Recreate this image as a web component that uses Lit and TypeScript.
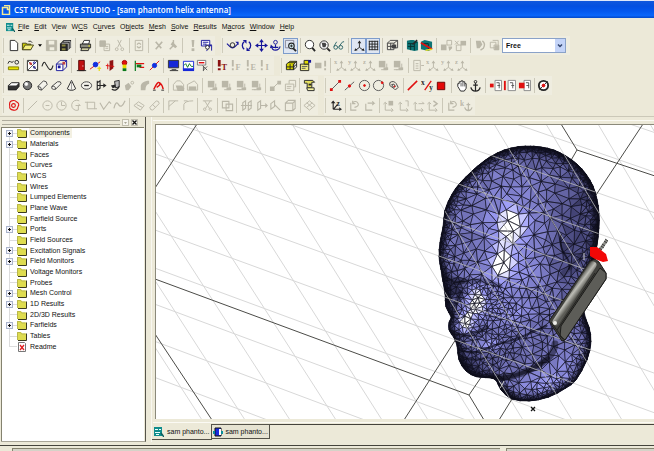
import { LitElement, html, svg, css } from "lit";
import { customElement, property, state } from "lit/decorators.js";
import { classMap } from "lit/directives/class-map.js";

/* ---------- icon drawing ---------- */
const G = "#bab7a8";
const K = "#262626";
const R = "#e01010";
const B = "#16169a";
const s = (d: string, c = K, w = 1) =>
  svg`<path d=${d} fill="none" stroke=${c} stroke-width=${w}></path>`;
const f = (d: string, c = K) => svg`<path d=${d} fill=${c}></path>`;
const fs = (d: string, c: string, k = K) =>
  svg`<path d=${d} fill=${c} stroke=${k} stroke-width="1"></path>`;
const o = (x: number, y: number, r: number, c = K, fill = "none", w = 1) =>
  svg`<circle cx=${x} cy=${y} r=${r} fill=${fill} stroke=${c} stroke-width=${w}></circle>`;
const t = (x: number, y: number, c: string, str: string, size = 7) =>
  svg`<text x=${x} y=${y} fill=${c} font-size=${size} font-weight="bold" font-family="Liberation Serif, serif">${str}</text>`;

const axes = (c: string) => [s("M8 3v6M8 9l-4 3M8 9l4 3", c), f("M6 4.500L8 1.500l2 3zM2.500 13l1-3 2.500 2zM13.500 13l-1-3-2.500 2z", c)];
const page = (c: string) => s("M3 1.500h7v11h-7zM5 5h3M5 7.500h3M5 10h3M11 7h3", c);
const stack = (c: string) => [f("M2 2h7v7H2z", c), s("M10.500 5v6.500h-6", c), f("M7 9h5v3H7z", c)];
const local = (c: string) => s("M3.500 4v8h8M1.500 5.500l2-2 2 2M10 10l2 2-2 2", c);

const icons: Record<string, unknown> = {
  new: fs("M3.500 1.500h5l3 3v8h-8z", "#fff"),
  open: [fs("M1.500 4.500h4l1 1h4v6h-9z", "#c8c800", "#44431a"), fs("M1.500 11.500l3-5h9l-3 5z", "#f4f080", "#44431a"), s("M8 2.500q3-1 4 1.500")],
  save: [fs("M1.500 1.500h11v11h-11z", G, G), f("M4 2h6v4H4zM5 9h5v3H5z", "#f0eee0")],
  "save all": [f("M1 5l4-4h8v8l-4 4H1z"), s("M3 4.500h7v7M5 2.500h7v7", "#fff", 0.7), f("M3 6h4v2H3zM3 10h4v2H3z", "#8c8840")],
  print: [fs("M3.500 5.500l2-4h6l-1 4z", "#fff"), fs("M1.500 5.500h11v4h-11z", "#8b8b80"), fs("M3 9.500h8l-1 3H2z", "#d0cda0"), f("M10 7h2v1h-2z", "#e6e600")],
  copy: [fs("M2 2h6v6H2z", G, G), s("M6.500 5.500h6v7h-6zM8 8h3M8 10h3", G)],
  cut: [s("M5 1l4 8M9 1L5 9", G), o(4, 11, 1.5, G), o(10, 11, 1.5, G)],
  update: [s("M3.500 1.500h8v11h-8z", G), s("M5.500 6q2-3 4 0M9.500 8q-2 3-4 0", G, 1.4)],
  delete: s("M4 3l6 7M11 3L4 11", G, 1.8),
  fill: [f("M7 3l5 5-2 2-5-4z", G), s("M8 1v6M4 11l4-4", G, 1.5)],
  run: [f("M6 1h3l-.600 7.500H6.600z", G), f("M6 10h3v3H6z", G)],
  parameters: [fs("M1.500 1.500h9v6h-9z", "#fff", B), s("M3 3.500h6M3 5.500h4", B), s("M5.500 6.500h7v6M7 13l5-7", B), o(8, 9, 2, K, "#fff")],
  "view rotate": [s("M1 5l3 3M4 8q3 3 6 0M10 8l3-3", B, 1.2), o(7, 6.5, 2.5, K), f("M10 3h3.500v3.500z", B)],
  "rotate plane": [s("M4.500 3a5 5 0 0 0 0 8M9.500 3a5 5 0 0 1 0 8", B, 1.4), f("M3 1h4v4zM11 13H7V9z", B)],
  pan: [s("M7 3v8M3 7h8", B, 1.2), f("M7 0l2.500 3.500h-5zM7 14l2.500-3.500h-5zM0 7l3.500-2.500v5zM14 7l-3.500-2.500v5z", B)],
  "dynamic rotate": [o(7, 3.500, 2, B), s("M3 8q0 4 4 4t5-4M7 6v4M4 9h6", B, 1.2), f("M1 10l1-4 3 3z", B)],
  "zoom window": [s("M1.500 1.500h9v8h-9z", "#889"), o(8, 7.500, 3, K, "#d8f0f8", 1.2), s("M10 10l3 3", K, 2), s("M6.500 7.500h3M8 6v3", K)],
  zoom: [o(7, 6, 4.5, K, "#fff"), s("M10 9.500l3 3.500", K, 2)],
  "zoom all": [o(6.5, 6.5, 4.5, K, "#fff"), f("M4 4h4l1 2-1 3H5z", "#444"), s("M10 10l3 3", K, 2)],
  glasses: [o(4, 9, 2, "#2b6468"), o(9.5, 9, 2, "#2b6468"), s("M2 8l3-5M7.500 8l4-5h1.500M6 9h1", "#2b6468")],
  axes: axes(K),
  "working plane": [s("M2 2.500h10M2 5.500h10M2 8.500h10M2 11.500h10M2.500 2v10M5.500 2v10M8.500 2v10M11.500 2v10", K)],
  wireframe: [s("M1.500 4.500h7v7h-7zM4.500 1.500h8v8h-4M1.500 4.500l3-3M8.500 4.500l4-3M5 4.500v7M2 8h7", "#444"), f("M6 6h5v4H6z", "#444")],
  mesh: [f("M1 2l4-1h3l5 2v9l-4 1-8-2z", "#0e7474"), s("M2 5h7v7M9 5l3-2M2 8h7M5 5v7", "#04302f"), s("M7 6l5-5", K, 1.5)],
  "mesh edit": [f("M1 3l4-2 8 2v8l-4 2-8-2z", "#0e7474"), s("M2 5h7v7", "#04302f"), s("M1 4l12 7", R, 2), s("M6 12l7-1", "#e7dc20", 1.6)],
  "link a": [s("M7.500 1.500h5v5h-5z", G), f("M1 6h6v6H1zM9 8h4v2l-3 3z", G)],
  "link b": [f("M7 2h6v5H7z", G), s("M2.500 6.500h5v6h-5zM1 2l4 4M5 2L1 6", G)],
  shape: [f("M2 2h5l2 4-3 4H3z", G), s("M9 2q4 3 1 8l-3 2", G, 1.5)],
  cubes: [s("M2.500 3.500h6v6h-6zM5 1.500h6v6M6.500 6.500h5v5h-5z", G), f("M7 7h5v5H7z", G)],

  units: [s("M1 5q1-4 3-2t3-1"), o(10.5, 3.5, 2), fs("M1.500 8.500h11v3h-11z", "#e7e300", "#7d7b00")],
  background: [fs("M1.500 1.500h11v11h-11z", "#fff"), s("M2 2l10 10M12 2L2 12", "#555"), o(5, 5, 1, R), o(9, 9, 1, B), o(9, 4, 1, B)],
  frequency: s("M1 8q2-7 4-3l3 5q3 4 5-3", K, 1.1),
  boundary: [fs("M1.500 5.500h7v7h-7z", "#fff", B), s("M1.500 5.500l4-4h7v7l-4 4M8.500 5.500l4-4", B), f("M3 7h3v3H3z", B), f("M8 3h3v3H8z", "#c04040")],
  port: [fs("M4 1.500h6v11H4z", "#c01010", "#500"), f("M8 7h1v1H8z", "#fff"), s("M2 12.500h10", K)],
  "discrete port": [s("M1 11L12 3", R), o(7, 6, 2.500, "#1030e0", "#1030e0"), s("M9 10h4M11 8v5", "#e8d800", 1.2)],
  "field source": [f("M6 2l4-1v9l-4 3z", "#8e1212"), s("M2 7l9 1M4 5v6", R)],
  excitation: [o(7, 4, 2.5, "#a60000", R), f("M5 6h4v4H5z", "#e4dd00"), f("M5 10h4v3H5z", "#0a7a1a")],
  monitor: [s("M2.500 2v11", "#0a7a20", 1.3), s("M3 5h9M7 9h5", R, 1.5), f("M4 6h5v3H4z", "#0a7a20")],
  probe: [s("M2 12L12 2", R), o(7, 7, 2.300, "#1030e0", "#1030e0")],
  display: [fs("M1.500 1.500h11v8h-11z", "#1628d8", "#333"), s("M5 11.500h5M3 12.500h9", "#333")],
  "time signal": [fs("M1.500 2.500h11v9h-11z", "#fff", "#1628d8"), s("M2 7l2-2 2 4 2-4 2 3h2", "#0b7a1d"), f("M1 10h12v3H1z", "#1628d8")],
  "result list": [fs("M1.500 1.500h9v5h-9z", "#fff", "#777"), s("M3 4h6", R, 1.5), s("M7 7l5 5M8 12l4-4M8 8v5", "#555")],
  "solver T": [f("M2 1h3v7H2zM2 10h3v2H2z", "#8a1111"), t(6, 12, "#8a1111", "T", 9)],
  "solver F": [f("M2 1h2v7H2zM2 10h2v2H2z", G), t(6, 12, G, "F", 9)],
  "solver E": [f("M2 1h2v7H2zM2 10h2v2H2z", G), t(6, 12, G, "E", 9)],
  "solver I": [f("M2 1h2v7H2zM2 10h2v2H2z", G), t(7, 12, G, "I", 9)],
  "mesh view": [fs("M1.500 5.500l4-3h7l-3 3v6h-8z", "#d8d400"), s("M1.500 8.500h8l3-3M5.500 5.500v6M9 5.500v6M12.500 2.500v6l-3 3M4 4h7")],
  "mesh properties": [fs("M1.500 5.500h9v7h-9z", "#f1ed80"), fs("M5.500 1.500h5v4h-5z", "#e0dc00"), f("M10 1h3v3h-3z", B), s("M3 8h6M3 10h4", "#555")],
  "mesh check": [f("M1 4h7v6H1z", G), f("M11 2h2v6h-2zM11 10h2v2h-2z", G)],
  "axis X": [axes(G), t(0, 5, G, "x", 7)],
  "axis Y": [axes(G), t(0, 5, G, "y", 7)],
  "axis Z": [axes(G), t(0, 5, G, "z", 7)],
  "stack a": stack(G),
  "stack b": [stack(G), s("M2 11.500h4", G)],
  sheet: page(G),

  brick: [f("M1 7l4-3h8v4l-3 4H1z", "#333"), f("M1 7l4-3h8l-3 3z", "#fff"), s("M1.500 7l3.500-3h8v4l-3 3.500H1.500z")],
  sphere: [o(7, 7, 4.5, K, "#777"), o(5.7, 5.5, 1.6, "#eee", "#fff")],
  cylinder: [fs("M2 8l6-6q4 0 4 4l-6 6q-4 0-4-4z", "#f4f3ec", "#444"), s("M2 8q4 0 4 4", "#444")],
  "elliptic cylinder": [fs("M2 8l6-5q4-1 4 2l-6 6q-5 1-4-3z", "#f4f3ec", "#444"), s("M2 8q4-1 4 3", "#444")],
  cone: [fs("M7 1.500l4.500 9q-4.500 3.500-9 0z", "#f4f3ec"), s("M7 2v10", "#999")],
  torus: [svg`<ellipse cx="7" cy="7" rx="5.500" ry="4" fill="#f4f3ec" stroke="#444"></ellipse>`, s("M4.500 7h5", K, 1.4)],
  extrude: [s("M3.500 2v10M3.500 4l3-2v8l-3 2M4 7h8", K, 1.2), f("M10 4.500l3.500 2.500-3.500 2.500z")],
  rotate: [fs("M6 2.500l5-1v7l-4 1z", "#bbb"), f("M2 7l5-1v3l-3 1z"), s("M3 11q5 3 8-3", K, 1.4)],
  loft: [f("M2 7l4-3 3 4-3 4H3z", G), o(10, 4, 1.5, G)],
  sweep: f("M3 12V7q1-4 7-5h2v3q-4 1-4 7z", G),
  "bond wire": [s("M1 12h3M10 12h3", K), s("M2 11q4-9 6-7t-3 5M8 4q3 2 4 7", R, 1.6)],
  "blend edge": [s("M1.500 6v6h11V6L9 2H5z", G), f("M4 7h7l2 3v3H6z", G)],
  "chamfer edge": [s("M1.500 6v6h11V6L9 2z", G), f("M3 8h8v4H3z", G)],
  "transform a": [s("M3 11l8-8", G), f("M1 8h5v5H1zM9 2h4v4H9z", G)],
  properties: [s("M1.500 5.500h9v7h-9zM5.500 5V1.500h7v7H11M3 8h5M3 10h4", G)],
  history: [fs("M1.500 1.500h9l2 2h-3v6h-5v-5h-3z", "#e5e060"), fs("M4 9.500h8v3H5z", "#f7f4a0"), f("M6 5h3v2H6z")],
  "pick edge": [s("M2 12L12 2", "#555"), f("M1 10h3v3H1zM10 1h3v3h-3z", R)],
  "pick point": [s("M2 12L12 3", "#555"), o(7, 7.5, 1.3, R, R)],
  "pick centre": [o(7, 7, 5.5, "#555"), o(7, 7, 1, R, R)],
  "pick circle": [o(7, 7, 5.5, "#555"), o(11, 4, 1, R, R)],
  "pick face": [s("M3 4q4-3 7 1l2 4q-3 4-5 1L3 7z", "#444"), s("M5 6q3-2 4 2l-2 1z", "#444"), o(8, 8, .6, R)],
  "pick line": s("M2 12L12 2", R, 1.6),
  "pick xy": [s("M4 12l7-10", R, 1.4), t(0, 6, K, "x", 8), t(9, 12, K, "y", 8)],
  "pick area": fs("M2.500 3.500h8v8h-8z", "#e40808", "#6b0000"),
  hand: [fs("M3 8V5h1.500V3h2V2h2v1h2v2h1.500v5l-2 3H6z", "#fff"), s("M6.500 4v4M8.500 3v5M10.500 5v3", "#555")],
  anchor: [o(7, 3, 1.4), s("M7 4v9M4.500 6.500h5", K, 1.3), s("M2 9q1 4 5 4t5-4", K, 1.5)],
  "pick list a": [fs("M6.500 1.500h7v11h-7z", "#fff", "#888"), s("M8 4h3v6M9 7h3", "#555"), f("M1 5h4v4H1z", R)],
  "pick list b": [fs("M5.500 1.500h8v11h-8z", "#fff", "#888"), s("M7.500 4h3v6M9 7h3", "#555"), f("M1 2h2v10H1z", R)],
  "pick list c": [fs("M6.500 1.500h7v11h-7z", "#fff", "#888"), s("M8.500 4h3v6M9 7h3", "#555"), f("M1 4h6v6H1z", R)],
  target: [o(7, 7, 5, K, "#fff", 2), s("M2.500 11.500l9-9"), o(7, 7, 1.5, R, R)],

  curve: [s("M5 2q4-1 5 1 4 2 2 5-1 5-5 4-5-1-4-4-1-5 2-6z", R, 1.2), o(7, 7, 2, R, "none", 1.2)],
  line: s("M2 12L12 2", G),
  circle: [o(7, 7, 5, G), s("M5 7h4", G)],
  ellipse: [o(7, 7, 5, G), s("M7 3v4h4", G)],
  arc: [s("M10 2a5.500 5.500 0 1 0-1 10", G), s("M6 7h5l-2-2M9 7v5", G)],
  rectangle: s("M3.500 3.500h8v7h-8zM1 3.500h3M11 10.500h3", G),
  polygon: s("M1 4l4 7 6-8 2 2", G, 1.2),
  spline: s("M1 10q2-9 5-4t7-4", G, 1.3),
  "curve blend": s("M1 7l5-4 6 4-4 5zM4 6l6 3", G),
  "curve sweep": s("M2 9l7-7q3 0 3 3l-7 7q-3 0-3-3zM5 6l3 3", G),
  chamfer: s("M2 12V2h10M2 8l7-6", G),
  fillet: s("M2 12V6q1-4 10-4M2 2h4", G),
  trim: [s("M4 2l5 8M10 2L5 10M2 2h10", G), o(4, 11, 1.3, G), o(10, 11, 1.3, G)],
  merge: s("M1.500 2.500h7v7h-7zM5.500 5.500h7v7h-7z", G, 1.2),
  "face a": s("M3 4v8l3-2V2zM9 4v8l3-2V2zM1 7h12", G, 1.2),
  "face b": s("M3 4v8l3-2V2zM6 7h7l-2-2M13 7l-2 2", G, 1.2),
  "face c": s("M2 5l4-3v6l-4 3zM6 6l6 6", G, 1.2),
  "face d": [s("M1.500 4.500h8v8h-8zM4 1.500h8v8M1.500 4.500L4 2M9.500 4.500L12 2M9.500 12.500l3-3", G, 1.2)],
  cloth: s("M1 7l6-5 6 5-6 5zM4 4l6 5M10 4L4 9", G),
  "WCS axes": [s("M4.500 3v8M4.500 11h7M5 11L9 6", K, 1.2), f("M2 4.500h5L4.500 1.500zM11 9l3 2-3 2z"), t(8, 7, K, "z", 8)],
  "WCS turn": s("M3 4v8h6M7 9q5-1 4-4-2-4-6-1M5 2v3h3", G, 1.2),
  "WCS move": s("M3 5v7h7M5 4.500h7l-2-2M12 4.500l-2 2", G, 1.2),
  "WCS a": [local(G), f("M7 2h5v5H7z", G)],
  "WCS b": [local(G), s("M9 2h3v6", G)],
  "WCS c": [local(G), s("M7 5h6l-2-2", G)],
  "WCS d": [local(G), s("M8 2l4 3-4 3", G, 1.5)],
  "WCS anchor": [t(0, 7, G, "k", 8), s("M9 4v8M7 6h4M5 9q1 3.500 4 3.500t4-3.500", G, 1.2)],
};

interface Bar { w: number; items: string[] }
const bar = (w: number, list: string): Bar => ({ w, items: list.split(",") });
const rows: Bar[][] = [
  [
    bar(208, "new,open,v,save,save all,|,print,|,copy,cut,|,update,|,delete,fill,|,run,parameters"),
    bar(277, "view rotate,rotate plane,pan,dynamic rotate,zoom window,|,zoom,zoom all,glasses,|,axes,working plane,|,wireframe,|,mesh,mesh edit,|,link a,link b,|,shape,cubes"),
  ],
  [
    bar(267, "units,|,background,frequency,boundary,|,port,discrete port,field source,excitation,monitor,probe,|,display,time signal,result list,|,solver T,solver F,solver E,solver I"),
    bar(185, "mesh view,mesh properties,mesh check,|,axis X,axis Y,axis Z,stack a,stack b,|,sheet,axis X,axis Y,axis Z"),
  ],
  [
    bar(311, "brick,sphere,cylinder,elliptic cylinder,cone,torus,extrude,rotate,loft,sweep,bond wire,|,blend edge,chamfer edge,|,stack a,stack a,stack b,stack b,|,transform a,properties,|,history"),
    bar(223, "pick edge,pick point,pick centre,pick circle,pick face,|,pick line,pick xy,pick area,|,hand,anchor,|,pick list a,pick list b,pick list c,|,target"),
  ],
  [
    bar(311, "curve,|,line,circle,ellipse,arc,rectangle,polygon,spline,|,curve blend,curve sweep,|,chamfer,fillet,|,trim,|,merge,|,face a,face b,face c,face d,|,cloth"),
    bar(146, "WCS axes,|,WCS turn,WCS move,|,WCS a,WCS b,WCS c,WCS d,|,WCS turn,WCS anchor"),
  ],
];

/* ---------- head mesh ---------- */
type P = [number, number];
const outline: P[] = [
  [526, 146], [541, 147], [554, 150], [566, 156], [577, 164], [586, 174], [593, 186], [597, 199], [599, 213], [599, 228],
  [597, 245], [594, 262], [586, 290], [584, 312], [589, 327], [591, 342], [587, 360], [576, 380], [566, 388], [549, 397],
  [529, 401], [512, 399], [501, 390], [494, 379], [477, 377], [466, 371], [459, 360], [457, 346], [454, 338],
  [449, 330], [449, 322], [451, 317], [446, 307], [445, 294], [443, 282], [441, 270], [439, 257], [440, 242], [443, 227], [445, 210], [452, 194],
  [460, 183], [472, 171], [484, 161], [497, 153], [511, 148],
];
function smooth(pts: P[]): P[] {
  const out: P[] = [];
  const n = pts.length;
  for (let i = 0; i < n; i++) {
    const [a, b, c, d] = [pts[(i + n - 1) % n], pts[i], pts[(i + 1) % n], pts[(i + 2) % n]];
    for (let k = 0; k < 4; k++) {
      const u = k / 4;
      const q = (j: 0 | 1) =>
        0.5 * (2 * b[j] + (c[j] - a[j]) * u + (2 * a[j] - 5 * b[j] + 4 * c[j] - d[j]) * u * u + (3 * b[j] - a[j] - 3 * c[j] + d[j]) * u * u * u);
      out.push([q(0), q(1)]);
    }
  }
  return out;
}
const edge = smooth(outline);
function inside(x: number, y: number) {
  let r = false;
  for (let i = 0, j = edge.length - 1; i < edge.length; j = i++) {
    const [a, b] = edge[i], [c, d] = edge[j];
    if (b > y !== d > y && x < ((c - a) * (y - b)) / (d - b) + a) r = !r;
  }
  return r;
}
const edgeDist = (x: number, y: number) => Math.min(...edge.map(([a, b]) => Math.hypot(a - x, b - y)));
const bump = (x: number, y: number, cx: number, cy: number, rx: number, ry: number) =>
  Math.exp(-(((x - cx) / rx) ** 2) - ((y - cy) / ry) ** 2);

function shade(x: number, y: number, d: number, noise: number) {
  let v = 0.36 + noise * 0.12;
  v += 0.24 * bump(x, y, 514, 225, 36, 50) + 0.16 * bump(x, y, 505, 275, 50, 16);
  v += 0.62 * bump(x, y, 511, 226, 13, 17) + 0.55 * bump(x, y, 503, 262, 11, 18);
  v += 0.85 * bump(x, y, 476, 302, 9, 14) + 0.8 * bump(x, y, 466, 322, 7, 10);
  v += 0.25 * bump(x, y, 510, 312, 28, 18) + 0.4 * bump(x, y, 489, 344, 10, 5);
  v += 0.3 * bump(x, y, 545, 382, 28, 16) + 0.15 * bump(x, y, 566, 355, 14, 20);
  v -= 0.2 * bump(x, y, 592, 215, 36, 60) + 0.3 * bump(x, y, 456, 288, 12, 12);
  v -= 0.16 * bump(x, y, 530, 150, 50, 14) + 0.24 * bump(x, y, 470, 365, 16, 14);
  v -= 0.14 * bump(x, y, 565, 260, 14, 30);
  if (d < 10) v -= (10 - d) * 0.025;
  return Math.max(0, Math.min(1, v));
}
const stops: [number, number, number, number][] = [
  [0, 30, 30, 56], [0.2, 76, 76, 130], [0.42, 116, 116, 186], [0.7, 156, 156, 246], [0.85, 205, 205, 255], [1, 255, 255, 255],
];
function tone(v: number) {
  for (let i = 1; i < stops.length; i++) {
    if (v <= stops[i][0]) {
      const a = stops[i - 1], b = stops[i], u = (v - a[0]) / (b[0] - a[0]);
      return `rgb(${[1, 2, 3].map((k) => Math.round(a[k] + (b[k] - a[k]) * u)).join(",")})`;
    }
  }
  return "#fff";
}
function buildMesh() {
  let seed = 7;
  const rnd = () => (seed = (seed * 16807) % 2147483647) / 2147483647;
  const pts: P[] = edge.filter((_, i) => i % 2 === 0);
  const radii = pts.map(() => 2);
  for (let k = 0; k < 16000; k++) {
    const x = 438 + rnd() * 163, y = 144 + rnd() * 259;
    if (!inside(x, y)) continue;
    const d = edgeDist(x, y);
    let r = Math.min(8, 2 + d * 0.24);
    if (Math.hypot(x - 468, y - 328) < 50) r = Math.min(r, 4);
    if (y > 285 && y < 368 && x < 555) r = Math.min(r, 6);
    if (pts.every(([a, b], i) => Math.hypot(a - x, b - y) > Math.min(r, radii[i] + 2))) {
      pts.push([x, y]);
      radii.push(r);
    }
  }
  const base = pts.length;
  pts.push([-2000, -1500], [3000, -1500], [500, 4000]);
  type T = [number, number, number, number, number, number];
  const tri = (a: number, b: number, c: number): T => {
    const [ax, ay] = pts[a], [bx, by] = pts[b], [cx, cy] = pts[c];
    const D = 2 * (ax * (by - cy) + bx * (cy - ay) + cx * (ay - by)) || 1e-9;
    const A = ax * ax + ay * ay, Bq = bx * bx + by * by, C = cx * cx + cy * cy;
    const ux = (A * (by - cy) + Bq * (cy - ay) + C * (ay - by)) / D;
    const uy = (A * (cx - bx) + Bq * (ax - cx) + C * (bx - ax)) / D;
    return [a, b, c, ux, uy, (ax - ux) ** 2 + (ay - uy) ** 2];
  };
  let tris: T[] = [tri(base, base + 1, base + 2)];
  for (let i = 0; i < base; i++) {
    const [x, y] = pts[i];
    const open = new Map<string, [number, number]>();
    const keep: T[] = [];
    for (const q of tris) {
      if ((x - q[3]) ** 2 + (y - q[4]) ** 2 >= q[5]) { keep.push(q); continue; }
      for (const [a, b] of [[q[0], q[1]], [q[1], q[2]], [q[2], q[0]]]) {
        const key = a < b ? `${a},${b}` : `${b},${a}`;
        if (open.has(key)) open.delete(key);
        else open.set(key, [a, b]);
      }
    }
    for (const [a, b] of open.values()) keep.push(tri(a, b, i));
    tris = keep;
  }
  const byTone = new Map<string, string>();
  for (const q of tris) {
    if (q[0] >= base || q[1] >= base || q[2] >= base) continue;
    const v = [pts[q[0]], pts[q[1]], pts[q[2]]];
    const x = (v[0][0] + v[1][0] + v[2][0]) / 3, y = (v[0][1] + v[1][1] + v[2][1]) / 3;
    if (!inside(x, y)) continue;
    const c = tone(Math.round(shade(x, y, edgeDist(x, y), rnd() - 0.5) * 24) / 24);
    const d = v.map((p) => p.map((n) => n.toFixed(1)).join(" ")).join("L");
    byTone.set(c, (byTone.get(c) ?? "") + `M${d}z`);
  }
  return [...byTone];
}
const meshPaths = buildMesh();

/* floor grid: [x1, y1, x2, y2] */
const shallow: number[][] = [[450, 62], [450, 101], [450, 141], [450, 181], [450, 221], [450, 260], [450, 299], [450, 338], [450, 377], [450, 414], [450, 452], [450, 489]]
  .map(([x, y], i) => { const m = 0.345 + i * 0.003; return [150, y - m * (x - 150), 660, y + m * (660 - x)]; });
const steep: number[][] = [[11, 202], [54, 245], [99, 290], [146, 336], [194, 382], [243, 428], [292, 475], [342, 523], [392, 572], [443, 622], [494, 672], [546, 722], [598, 772], [650, 824]]
  .map(([a, b]) => [a, 124, b, 420]);
const black: number[][] = [
  [155, 188, 197, 124], [155, 279, 469, 395], [469, 395, 484, 420], [469, 395, 482, 376], [404, 420, 456, 339],
  [155, 334, 212, 420], [512, 399, 499, 420], [561, 124, 577, 150], [577, 150, 655, 176], [577, 150, 570, 162], [596, 195, 643, 124],
];
const lines = (l: number[][]) => l.map(([a, b, c, d]) => `M${a} ${b}L${c} ${d}`).join("");

@customElement("model-view")
class ModelView extends LitElement {
  static styles = css`
    :host { display: block; flex: 1; min-height: 0; overflow: hidden; background: #fff; }
    svg { display: block; width: 100%; height: 100%; }
  `;
  render() {
    const head = "M" + edge.map((p) => p.map((n) => n.toFixed(1)).join(" ")).join("L") + "z";
    const grid = lines([...shallow, ...steep]);
    return html`<svg viewBox="156 125 498 294" preserveAspectRatio="xMinYMin slice" role="img" aria-label="Head phantom with handset">
      <defs>
        <clipPath id="head"><path d=${head}></path></clipPath>
        <linearGradient id="tube" gradientUnits="userSpaceOnUse" x1="569" y1="290" x2="577" y2="296">
          <stop offset="0" stop-color="#4a4a45"></stop><stop offset=".5" stop-color="#bdbdb6"></stop><stop offset="1" stop-color="#5c5c56"></stop>
        </linearGradient>
      </defs>
      <path d=${grid} stroke="#d8d8d8" fill="none"></path>
      <path d=${lines(black)} stroke="#4c4c48" fill="none"></path>
      <path d=${head} fill="#2a2a50"></path>
      ${meshPaths.map(([c, d]) => svg`<path d=${d} fill=${c} stroke="#10101e" stroke-width="0.6" stroke-linejoin="round"></path>`)}
      <g clip-path="url(#head)" fill="none" stroke="#0c0c18" stroke-linecap="round">
        <path d=${head} stroke-width="14" opacity="0.2"></path>
        <path d=${head} stroke-width="8" opacity="0.35"></path>
        <path d=${head} stroke-width="4" opacity="0.75"></path>
        <path d="M440 266q6 12 16 14t20 1 24 5" stroke-width="5" opacity="0.35"></path>
        <path d="M443 276q10 10 20 6" stroke-width="4" opacity="0.5"></path>
        <path d="M446 292q3 12 7 18l8-18" stroke-width="5" opacity="0.45"></path>
        <path d="M451 331q6 5 16 4t20-8" stroke-width="4" opacity="0.5"></path>
        <path d="M462 350q8 4 15 2t24-9q18-4 34-12t10-4" stroke-width="2" opacity="0.65"></path>
        <path d="M463 358q12 4 24-1" stroke-width="2" opacity="0.5"></path>
        <path d="M492 378q14 1 30-5t26-15q6-6 7-14" stroke-width="7" opacity="0.5"></path>
        <path d="M492 378q14 1 30-5t26-15" stroke-width="4" opacity="0.6"></path>
        <path d="M496 384q8 12 18 14" stroke-width="9" opacity="0.5"></path>
        <path d="M561 235q-2 12 4 20t4 14" stroke-width="2" opacity="0.7"></path>
        <path d="M562 275l22-22" stroke-width="6" opacity="0.25"></path>
        <path d="M584 305l6 30" stroke-width="7" opacity="0.4"></path>
      </g>
      <path clip-path="url(#head)" d=${grid} stroke="#b8b8b8" fill="none" opacity="0.8"></path>
      <g stroke="#1c1c1a" stroke-linejoin="round">
        <path d="M549 321l41-60 5-2 4 3 7 11v6l-41 61-3 1z" fill="#42423e"></path>
        <path d="M561 326l39-58 6 5v6l-41 61-5-4z" fill="#5d5d58"></path>
      </g>
      <path d="M556 322L593 265" stroke="url(#tube)" stroke-width="7" stroke-linecap="round"></path>
      <path d="M551 322l12 17M557 330l38-57" stroke="#22221f" fill="none"></path>
      <circle cx="555" cy="323" r="2" fill="#eeeee8"></circle>
      <path d="M599 251l8-11" stroke="#8d8d88" stroke-width="3"></path>
      <path d="M599 248l3 2M601 246l3 2M602 244l3 2M604 241l3 2M605 239l3 2" stroke="#222" stroke-width="0.8"></path>
      <path d="M590 247l7 0 9 7 2 7-5 1-8-3-5-3z" fill="#f20707"></path>
      <path d="M531 407l4 4M535 407l-4 4" stroke="#111" stroke-width="1.300"></path>
      <path d="M499 381l3 4 2-4M502 385l-2 3M584 253v7" stroke="#ccc" fill="none"></path>
    </svg>`;
  }
}

/* ---------- navigation tree ---------- */
const tree: [string, boolean][] = [
  ["Components", true], ["Materials", true], ["Faces", false], ["Curves", false], ["WCS", false], ["Wires", false],
  ["Lumped Elements", false], ["Plane Wave", false], ["Farfield Source", false], ["Ports", true], ["Field Sources", false],
  ["Excitation Signals", true], ["Field Monitors", true], ["Voltage Monitors", false], ["Probes", false], ["Mesh Control", true],
  ["1D Results", true], ["2D/3D Results", false], ["Farfields", true], ["Tables", false], ["Readme", false],
];

@customElement("nav-tree")
class NavTree extends LitElement {
  @state() private selected = "Components";
  static styles = css`
    :host { display: block; flex: 1; min-height: 0; overflow: hidden; background: #fff; }
    ul { list-style: none; margin: 0; padding: 0 0 0 3px; display: grid; grid-auto-rows: 1fr; height: 224px; }
    li { display: flex; align-items: center; min-height: 0; }
    .twig { flex: none; width: 11px; height: 11px; overflow: visible; }
    .pic { flex: none; width: 11px; height: 10px; margin-right: 2px; }
    button { border: 0; margin: 0; padding: 0 2px 0 1px; height: 10px; background: none; color: #111; font: 7px/10px "Liberation Sans", Arial, sans-serif; white-space: nowrap; }
    .on { background: #f3f0e2; }
  `;
  render() {
    return html`<ul>${tree.map(([name, kids], i) => html`<li>
      <svg class="twig" viewBox="0 0 11 11" aria-hidden="true">
        <path d="M4.500 ${i ? -1 : 5}V${i === tree.length - 1 ? 6 : 12}M5 5.500h7" stroke="#dcdcdc"></path>
        ${kids ? svg`<rect x="1.500" y="2.500" width="6" height="6" fill="#f4f4fa" stroke="#aab4cc"></rect><path d="M3 5.500h3M4.500 4v3" stroke="#111"></path>` : ""}
      </svg>
      <svg class="pic" viewBox="0 0 11 10" aria-hidden="true">
        ${name === "Readme"
          ? svg`<path d="M2.500 .500h6l1 1v8h-7z" fill="#fff" stroke="#777"></path><path d="M4 3l4 5M8 3L4 8" fill="none" stroke="#e02020" stroke-width="1.300"></path>`
          : svg`<path d="M2 9.500h8.500V2.500" fill="none" stroke="#3a3a20"></path><path d="M1 2.500V1h4l1 1.500h4V9H1z" fill="#dedc50"></path><path d="M1.500 9V1.500h3l1 1.500h4" fill="none" stroke="#b9b74a"></path>`}
      </svg>
      <button class=${classMap({ on: this.selected === name })} @click=${() => (this.selected = name)}>${name}</button>
    </li>`)}</ul>`;
  }
}

/* ---------- toolbars ---------- */
const pressed = ["zoom window", "axes", "working plane"];

@customElement("tool-bar")
class ToolBar extends LitElement {
  @property({ attribute: false }) bar!: Bar;
  static styles = css`
    :host { display: flex; height: 19px; background: #efede0; align-items: center; padding-right: 1px; }
    .grip { flex: none; width: 1px; height: 15px; margin: 0 1px; border-left: 1px solid #cfccbb; }
    .tools { display: flex; align-items: center; }
    .tool { flex: 1 1 0; min-width: 0; height: 16px; padding: 0; border: 0; background: none; display: flex; align-items: center; justify-content: center; }
    .pressed { background: #dfe6f2; box-shadow: inset 0 0 0 1px #7d9ccb; }
    .tool svg { flex: none; width: 13px; height: 13px; }
    .sep { flex: none; width: 1px; height: 15px; margin: 0 2px; background: #cbc8b8; }
    .drop { flex: none; width: 9px; height: 16px; padding: 0; border: 0; background: none; display: flex; align-items: center; justify-content: center; }
    .drop svg { width: 4px; height: 3px; }
  `;
  render() {
    return html`<span class="grip"></span>
      <div class="tools" role="toolbar" style="width:${this.bar.w}px">
        ${this.bar.items.map((n) => n === "|" ? html`<span class="sep"></span>`
          : n === "v" ? html`<button class="drop" aria-label="recent files"><svg viewBox="0 0 5 3"><path d="M0 0h5L2.500 3z"></path></svg></button>`
          : html`<button class=${classMap({ tool: true, pressed: pressed.includes(n) })} aria-label=${n}><svg viewBox="0 0 14 14">${icons[n]}</svg></button>`)}
      </div><slot></slot>`;
  }
}

const docIcon = svg`<path d="M0 0h8v9H0z" fill="#0f8c8c"></path><path d="M1 2.500h3M1 5.500h5M2 7.500h3M5 2.500h2" stroke="#e8ffff"></path><path d="M7 6l3 4" stroke="#0b5c5c" stroke-width="1.500"></path>`;
const menus = ["_File", "_Edit", "V_iew", "W_CS", "C_urves", "O_bjects", "_Mesh", "_Solve", "_Results", "M_acros", "_Window", "_Help"];

@customElement("app-root")
class AppRoot extends LitElement {
  static styles = css`
    :host { display: flex; flex-direction: column; height: 100vh; overflow: hidden; background: #ece9d8; color: #111; font: 7px/10px "Liberation Sans", Arial, sans-serif; }
    button { font: inherit; color: inherit; }
    .title { flex: none; display: flex; align-items: center; gap: 3px; height: 18px; padding: 0 1px; box-sizing: border-box; color: #fff; border-top: 1px solid #dfe8fa;
      background: linear-gradient(#1158dc, #0450e0 30%, #0458ee 60%, #0a66fa 85%, #0348c8); }
    .title svg { width: 10px; height: 10px; }
    h1 { margin: 0; font: 600 8px/12px "Open Sans", sans-serif; white-space: nowrap; }
    .menu { flex: none; display: flex; align-items: center; height: 18px; padding-left: 6px; }
    .menu svg { width: 9px; height: 9px; margin-right: 1px; }
    .menu button { border: 0; padding: 0 3px 0 2px; background: none; line-height: 10px; }
    .row { flex: none; display: flex; gap: 6px; height: 20px; padding-left: 2px; }
    .pick { position: relative; flex: none; margin-right: 3px; }
    select { display: block; appearance: none; width: 64px; height: 15px; padding: 0 0 0 3px; border: 1px solid #8aa2c8; border-radius: 0; background: #fff; color: #111; font: bold 7px/12px "Liberation Sans", sans-serif; }
    .chev { position: absolute; right: 1px; top: 1px; width: 10px; height: 13px; background: #c4d4f8; pointer-events: none; }
    .work { flex: 1; display: flex; min-height: 0; border-top: 1px solid #cbc8b8; }
    aside { flex: none; display: flex; flex-direction: column; width: 145px; margin-left: 1px; border-right: 1px solid #55534a; border-bottom: 1px solid #a9a698; box-sizing: border-box; padding-right: 1px; }
    .head { flex: none; display: flex; align-items: center; gap: 2px; height: 10px; padding: 0 6px 0 1px; }
    .grab { flex: 1; height: 3px; border: solid #aeab9c; border-width: 1px 0; }
    .head button { flex: none; width: 7px; height: 7px; padding: 0; border: 1px solid #c2bfaf; background: #f6f5ee; display: flex; align-items: center; justify-content: center; }
    .head svg { width: 5px; height: 5px; }
    nav-tree { border: solid #84826f; border-width: 1px 0 0 1px; }
    main { flex: 1; min-width: 0; display: flex; flex-direction: column; margin-left: 5px; border-left: 1px solid #f8f7f0; }
    .frame { flex: 1; min-height: 0; display: flex; margin: 3px 0 0 1px; padding: 3px 0 3px 2px; border: solid #fbfaf4; border-width: 1px 0 1px 0; }
    .frame model-view { border: solid #8b897a; border-width: 1px 0 0 1px; }
    .tabs { flex: none; display: flex; height: 18px; margin-top: 1px; }
    .tab { flex: none; display: flex; align-items: center; gap: 2px; box-sizing: border-box; padding: 0 1px; border: solid #55534a; border-width: 1px 1px 1px 0; height: 15px; background: #e6e3d2; white-space: nowrap; }
    .tab svg { flex: none; width: 10px; height: 10px; }
    .active { gap: 3px; height: 16px; padding: 1px 2px 0; border-top: 0; background: #ece9d8; }
    .rest { flex: 1; border-top: 1px solid #45433b; }
    footer { flex: none; display: flex; gap: 6px; height: 6px; margin-top: 3px; padding: 2px 0 0 12px; box-sizing: border-box; border-top: 1px solid #45443c; }
    footer span { background: #d5d3c8; border: solid #85836f; border-width: 1px 0 0 1px; }
    .wide { flex: 33; }
    .slim { flex: 10; }
  `;
  render() {
    return html`
      <header class="title">
        <svg viewBox="0 0 10 10"><path d="M1.500 2.500h5v2h2v5h-7zM3 .500h5.500v4" fill="none" stroke="#f2e994" stroke-width="1.500"></path></svg>
        <h1>CST MICROWAVE STUDIO - [sam phantom helix antenna]</h1>
      </header>
      <nav class="menu">
        <svg viewBox="0 0 10 10">${docIcon}</svg>
        ${menus.map((m) => { const i = m.indexOf("_"); return html`<button>${m.slice(0, i)}<u>${m[i + 1]}</u>${m.slice(i + 2)}</button>`; })}
      </nav>
      ${rows.map((r, i) => html`<div class="row">${r.map((b, j) => html`<tool-bar .bar=${b}>
        ${i === 0 && j === 1 ? html`<span class="pick"><select aria-label="Selection mode"><option>Free</option></select>
          <svg class="chev" viewBox="0 0 10 13"><path d="M3 5.500l2 2 2-2" fill="none" stroke="#33456e" stroke-width="1.500"></path></svg></span>` : ""}
      </tool-bar>`)}</div>`)}
      <div class="work">
        <aside>
          <div class="head"><span class="grab"></span>
            <button aria-label="Float panel"><svg viewBox="0 0 5 5"><path d="M1 2h3L2.500 4z" fill="#a8a594"></path></svg></button>
            <button aria-label="Close panel"><svg viewBox="0 0 5 5"><path d="M.500 .500l4 4M4.500 .500l-4 4" stroke="#111" stroke-width="1.300"></path></svg></button>
          </div>
          <nav-tree></nav-tree>
        </aside>
        <main>
          <div class="frame"><model-view></model-view></div>
          <div class="tabs" role="tablist">
            <button class="tab active" role="tab" aria-selected="true"><svg viewBox="0 0 10 10">${docIcon}</svg>sam phanto...</button>
            <button class="tab" role="tab" aria-selected="false"><svg viewBox="0 0 10 10"><path d="M2 1h6v8H2z" fill="#1a2ae0" stroke="#111"></path><path d="M0 4h2v3H0zM8 4h2v3H8z" fill="#0a8f9a"></path><path d="M6 2h2v6H6z" fill="#fff"></path></svg>sam phanto...</button>
            <span class="rest"></span>
          </div>
        </main>
      </div>
      <footer><span class="wide"></span><span class="slim"></span></footer>`;
  }
}
